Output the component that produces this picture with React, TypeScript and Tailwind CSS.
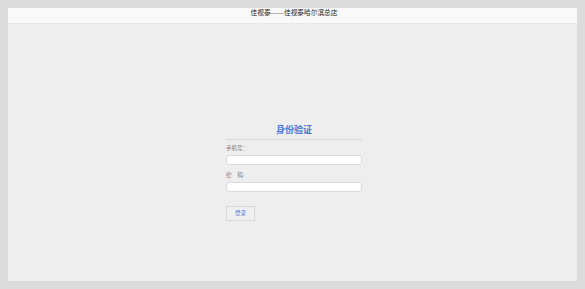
import React from 'react';

const App: React.FC = () => {
  return (
    <div className="h-screen bg-[#dcdcdc] p-2">
      <div className="h-full flex flex-col bg-[#eeeeee]">
        {/* Header */}
        <header
          className="h-4 shrink-0 bg-[#f9f9f9] border-b border-[#e8e8e8] flex justify-center pt-[1px] pl-[3px] text-[6.7px] leading-[8px] text-[#222]"
          style={{ fontFamily: '"Liberation Serif", "Noto Sans CJK SC", serif' }}
        >
          佳视泰——佳视泰哈尔滨总店
        </header>

        <main
          className="flex-1 flex justify-center pt-[101px] pl-[3px]"
          style={{ fontFamily: '"Liberation Sans", "Noto Sans CJK SC", sans-serif' }}
        >
          <div className="w-[136px] flex flex-col">
            <h2 className="text-center text-[9px] leading-[11px] font-bold text-[#4478d4] pb-[3px] border-b border-[#d6d6d6]">
              身份验证
            </h2>
            <label className="mt-[4px] text-[5.5px] leading-[8px] text-[#777]">手机号：</label>
            <input
              type="text"
              className="mt-[3px] h-[10px] w-full bg-white border border-[#dadada] rounded-[3px] outline-none"
            />
            <label className="mt-[6px] text-[5.5px] leading-[8px] text-[#777]">
              密<span className="inline-block w-[6px]" />码:
            </label>
            <input
              type="password"
              className="mt-[3px] h-[10px] w-full bg-white border border-[#dadada] rounded-[3px] outline-none"
            />
            <div className="mt-[14px]">
              <button className="w-[29px] h-[15px] border border-[#d6d6d6] bg-[#f0f0f0] text-[5.5px] text-[#3a72d8] flex items-center justify-center">
                登录
              </button>
            </div>
          </div>
        </main>
      </div>
    </div>
  );
};

export default App;
